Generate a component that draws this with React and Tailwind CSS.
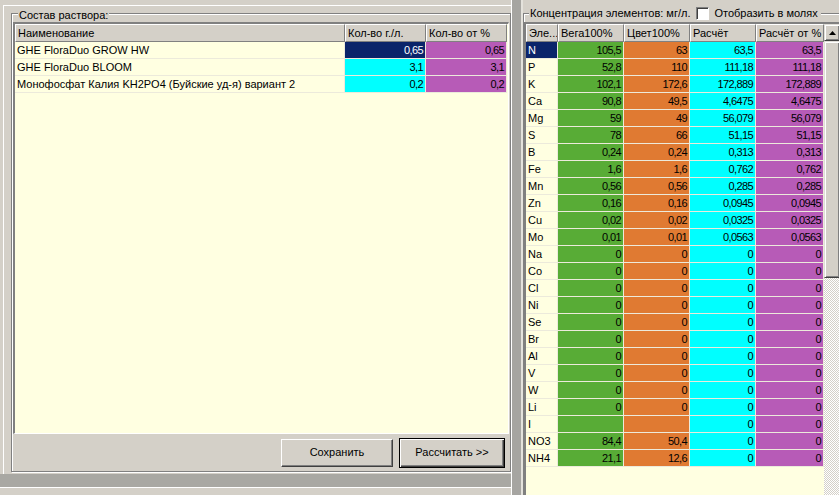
import React from 'react'

const mix = [
  { name: 'GHE FloraDuo GROW HW', g: '0,65', p: '0,65', sel: true },
  { name: 'GHE FloraDuo BLOOM', g: '3,1', p: '3,1' },
  { name: 'Монофосфат Калия KH2PO4 (Буйские уд-я) вариант 2', g: '0,2', p: '0,2' },
]

const zero = ['0', '0', '0', '0']
const rows = [
  ['N', '105,5', '63', '63,5', '63,5'],
  ['P', '52,8', '110', '111,18', '111,18'],
  ['K', '102,1', '172,6', '172,889', '172,889'],
  ['Ca', '90,8', '49,5', '4,6475', '4,6475'],
  ['Mg', '59', '49', '56,079', '56,079'],
  ['S', '78', '66', '51,15', '51,15'],
  ['B', '0,24', '0,24', '0,313', '0,313'],
  ['Fe', '1,6', '1,6', '0,762', '0,762'],
  ['Mn', '0,56', '0,56', '0,285', '0,285'],
  ['Zn', '0,16', '0,16', '0,0945', '0,0945'],
  ['Cu', '0,02', '0,02', '0,0325', '0,0325'],
  ['Mo', '0,01', '0,01', '0,0563', '0,0563'],
  ['Na', ...zero],
  ['Co', ...zero],
  ['Cl', ...zero],
  ['Ni', ...zero],
  ['Se', ...zero],
  ['Br', ...zero],
  ['Al', ...zero],
  ['V', ...zero],
  ['W', ...zero],
  ['Li', ...zero],
  ['I', '', '', '0', '0'],
  ['NO3', '84,4', '50,4', '0', '0'],
  ['NH4', '21,1', '12,6', '0', '0'],
]

const line = 'border-r border-b border-[#eceadb]'
const num = 'text-right pr-[2px] tracking-[-0.6px] leading-[16px] whitespace-nowrap'
const colBg = ['bg-[#58ac36]', 'bg-[#e07a32]', 'bg-[#00ffff]', 'bg-[#b75bb7]']
const colW = ['w-[66px]', 'w-[66px]', 'w-[66px]', 'w-[68px]']

function Head({ className = '', children }) {
  return (
    <div
      className={`h-[18px] shrink-0 bg-[#d4d0c8] border border-t-white border-l-white border-r-[#808080] border-b-[#808080] pl-[2px] leading-[16px] whitespace-nowrap overflow-hidden ${className}`}
    >
      {children}
    </div>
  )
}

export default function App() {
  return (
    <div className="w-[839px] h-[495px] flex overflow-hidden bg-[#d4d0c8] text-black text-[11px] font-['Liberation_Sans',Arial,sans-serif]">
      {/* left side: mix list */}
      <div className="w-[511px] shrink-0 flex flex-col">
        <div className="h-[5px]" />
        <div className="h-[469px] ml-[3px] border-t border-l border-white pl-[7px] pt-[7px]">
          <div className="w-[500px] h-[459px] border border-[#808080] shadow-[inset_1px_1px_0_#ffffff,1px_1px_0_#ffffff] flex flex-col">
            <div className="-mt-[6px] ml-[6px] h-[14px] leading-[14px] w-fit bg-[#d4d0c8] px-[1px]">
              Состав раствора:
            </div>
            <div className="ml-[1px] w-[496px] h-[412px] border-t-2 border-l-2 border-[#808080] border-r border-b border-r-white border-b-white bg-[#ffffe1] flex flex-col">
              <div className="flex">
                <Head className="w-[330px]">Наименование</Head>
                <Head className="w-[81px]">Кол-во г./л.</Head>
                <Head className="w-[81px]">Кол-во от %</Head>
              </div>
              {mix.map((r) => (
                <div key={r.name} className="flex h-[17px]">
                  <div className={`w-[330px] pl-[2px] leading-[16px] whitespace-nowrap overflow-hidden ${line}`}>{r.name}</div>
                  <div className={`w-[81px] ${num} ${line} ${r.sel ? 'bg-[#0a246a] text-white' : 'bg-[#00ffff]'}`}>{r.g}</div>
                  <div className={`w-[81px] ${num} ${line} bg-[#b75bb7]`}>{r.p}</div>
                </div>
              ))}
            </div>
            <div className="flex-1 flex items-center justify-end gap-[6px] pr-[5px]">
              <button className="w-[112px] h-[28px] bg-[#d4d0c8] border border-t-white border-l-white border-r-[#404040] border-b-[#404040] shadow-[inset_-1px_-1px_0_#808080]">
                Сохранить
              </button>
              <button className="w-[106px] h-[30px] bg-[#d4d0c8] border border-black shadow-[inset_1px_1px_0_#ffffff,inset_-1px_-1px_0_#404040,inset_-2px_-2px_0_#808080]">
                Рассчитать &gt;&gt;
              </button>
            </div>
          </div>
        </div>
        <div className="h-[13px] bg-[#a9a8a3]" />
        <div className="flex-1 border-t border-white bg-[#d4d0c8]" />
      </div>

      {/* splitter */}
      <div className="w-[12px] shrink-0 bg-[#a6a5a1] border-l-[1px] border-l-white border-r-2 border-r-[#e4e2dc]" />

      {/* right side: concentrations */}
      <div className="flex-1 min-w-0 flex flex-col pt-[13px]">
        <div className="flex-1 border-t border-l border-[#808080] shadow-[inset_1px_1px_0_#ffffff] flex flex-col">
          <div className="-mt-[8px] ml-[5px] h-[15px] flex items-center">
            <span className="bg-[#d4d0c8] pl-[1px] pr-[6px] leading-[15px] whitespace-nowrap">Концентрация элементов: мг/л.</span>
            <span className="w-[13px] h-[13px] shrink-0 bg-white border border-t-[#808080] border-l-[#808080] border-r-white border-b-white shadow-[inset_1px_1px_0_#404040]" />
            <span className="bg-[#d4d0c8] pl-[5px] pr-[3px] leading-[15px] whitespace-nowrap">Отобразить в молях</span>
          </div>
          <div className="mt-[1px] flex-1 flex border-t-2 border-l-2 border-[#808080]">
            <div className="w-[298px] shrink-0 bg-[#ffffe1] flex flex-col">
              <div className="flex">
                <Head className="w-[32px]">Эле...</Head>
                <Head className="w-[66px]">Вега100%</Head>
                <Head className="w-[66px]">Цвет100%</Head>
                <Head className="w-[66px]">Расчёт</Head>
                <Head className="w-[68px]">Расчёт от %</Head>
              </div>
              {rows.map(([el, ...vals], i) => (
                <div key={el} className="flex h-[17px]">
                  <div
                    className={`w-[32px] pl-[2px] leading-[16px] ${line} ${i === 0 ? 'bg-[#0a246a] text-white' : ''}`}
                  >
                    {el}
                  </div>
                  {vals.map((v, j) => (
                    <div key={j} className={`${colW[j]} ${colBg[j]} ${num} ${line}`}>
                      {v}
                    </div>
                  ))}
                </div>
              ))}
            </div>
            {/* scrollbar */}
            <div className="w-[16px] shrink-0 flex flex-col">
              <div className="h-[17px] bg-[#d4d0c8] border border-t-[#e0ded8] border-l-[#e0ded8] border-r-[#404040] border-b-[#404040] shadow-[inset_1px_1px_0_#ffffff,inset_-1px_-1px_0_#808080] flex items-center justify-center">
                <svg width="7" height="4" viewBox="0 0 7 4">
                  <polygon points="3.5,0 7,4 0,4" fill="#000" />
                </svg>
              </div>
              <div className="h-[237px] bg-[#d4d0c8] border border-t-[#e0ded8] border-l-[#e0ded8] border-r-[#404040] border-b-[#404040] shadow-[inset_1px_1px_0_#ffffff,inset_-1px_-1px_0_#808080]" />
              <div className="flex-1 bg-[repeating-conic-gradient(#ffffff_0%_25%,#d4d0c8_0%_50%)] bg-[length:2px_2px]" />
            </div>
          </div>
        </div>
      </div>
    </div>
  )
}
